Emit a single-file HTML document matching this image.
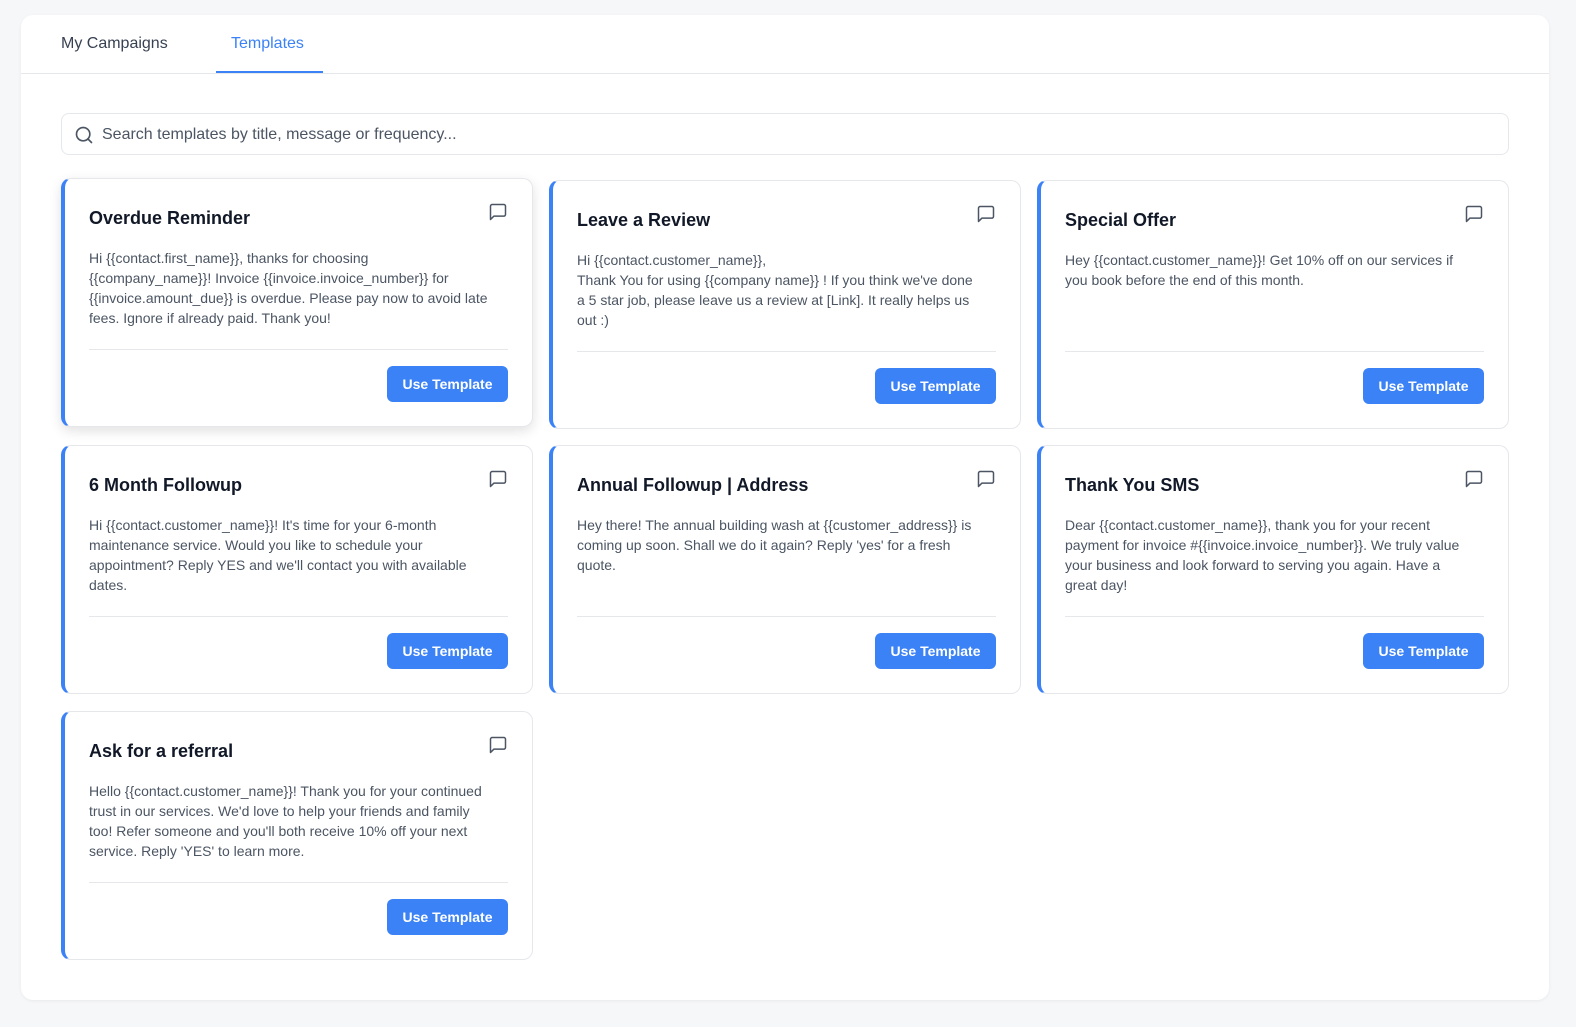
<!DOCTYPE html>
<html><head><meta charset="utf-8"><style>
*{box-sizing:border-box;margin:0;padding:0}
body{width:1576px;height:1027px;background:#f6f7f9;font-family:"Liberation Sans",Arial,sans-serif;position:relative;overflow:hidden}
.main{position:absolute;left:21px;top:15px;width:1528px;height:985px;background:#fff;border-radius:12px;box-shadow:0 1px 3px rgba(0,0,0,.06)}
.tabs{position:absolute;left:0;top:0;right:0;height:59px;border-bottom:1px solid #e5e7eb}
.tab{position:absolute;top:20px;font-size:16px;color:#374151}
.tab.act{color:#3b82f6}
.ul{position:absolute;left:195px;top:56px;width:107px;height:2px;background:#3b82f6}
.search{position:absolute;left:40px;top:98px;width:1448px;height:42px;border:1px solid #e5e7eb;border-radius:8px}
.search span{position:absolute;left:40px;top:12px;font-size:16px;color:#4b5563}
.search svg{position:absolute;left:12px;top:11px}
.card{position:absolute;width:472px;height:249px;background:#fff;border:1px solid #e5e7eb;border-left:4px solid #3b82f6;border-radius:10px}
.card.hov{box-shadow:0 4px 12px rgba(0,0,0,.12)}
.card h3{position:absolute;left:24px;top:25px;font-size:18px;font-weight:bold;color:#111827;line-height:28px}
.card p{position:absolute;left:24px;top:69px;width:430px;font-size:14px;line-height:20px;color:#4b5563;white-space:nowrap}
.card .ic{position:absolute;right:24px;top:23px}
.card hr{position:absolute;left:24px;right:24px;top:170px;border:0;border-top:1px solid #e5e7eb}
.card .btn{position:absolute;right:24px;top:187px;width:121px;height:36px;background:#3b82f6;color:#fff;border-radius:6px;font-size:14px;font-weight:bold;text-align:center;line-height:36px}
</style></head><body>
<div class="main">
<div class="tabs"><div class="tab" style="left:40px">My Campaigns</div><div class="tab act" style="left:210px">Templates</div><div class="ul"></div></div>
<div class="search"><svg width="20" height="20" viewBox="0 0 24 24" fill="none" stroke="#4b5563" stroke-width="2" stroke-linecap="round"><circle cx="11" cy="11" r="8"/><path d="M21 21l-4.3-4.3"/></svg><span>Search templates by title, message or frequency...</span></div>
</div>
<svg width="0" height="0" style="position:absolute"><defs><symbol id="m" viewBox="0 0 24 24"><path d="M21 15a2 2 0 0 1-2 2H7l-4 4V5a2 2 0 0 1 2-2h14a2 2 0 0 1 2 2z" fill="none" stroke="#4b5563" stroke-width="1.8" stroke-linejoin="round"/></symbol></defs></svg>

<div class="card hov" style="left:61px;top:178px"><h3>Overdue Reminder</h3><svg class="ic" width="20" height="20"><use href="#m"/></svg><p>Hi {{contact.first_name}}, thanks for choosing<br>{{company_name}}! Invoice {{invoice.invoice_number}} for<br>{{invoice.amount_due}} is overdue. Please pay now to avoid late<br>fees. Ignore if already paid. Thank you!</p><hr><div class="btn">Use Template</div></div>
<div class="card" style="left:549px;top:180px"><h3>Leave a Review</h3><svg class="ic" width="20" height="20"><use href="#m"/></svg><p>Hi {{contact.customer_name}},<br>Thank You for using {{company name}} ! If you think we've done<br>a 5 star job, please leave us a review at [Link]. It really helps us<br>out :)</p><hr><div class="btn">Use Template</div></div>
<div class="card" style="left:1037px;top:180px"><h3>Special Offer</h3><svg class="ic" width="20" height="20"><use href="#m"/></svg><p>Hey {{contact.customer_name}}! Get 10% off on our services if<br>you book before the end of this month.</p><hr><div class="btn">Use Template</div></div>

<div class="card" style="left:61px;top:445px"><h3>6 Month Followup</h3><svg class="ic" width="20" height="20"><use href="#m"/></svg><p>Hi {{contact.customer_name}}! It's time for your 6-month<br>maintenance service. Would you like to schedule your<br>appointment? Reply YES and we'll contact you with available<br>dates.</p><hr><div class="btn">Use Template</div></div>
<div class="card" style="left:549px;top:445px"><h3>Annual Followup | Address</h3><svg class="ic" width="20" height="20"><use href="#m"/></svg><p>Hey there! The annual building wash at {{customer_address}} is<br>coming up soon. Shall we do it again? Reply 'yes' for a fresh<br>quote.</p><hr><div class="btn">Use Template</div></div>
<div class="card" style="left:1037px;top:445px"><h3>Thank You SMS</h3><svg class="ic" width="20" height="20"><use href="#m"/></svg><p>Dear {{contact.customer_name}}, thank you for your recent<br>payment for invoice #{{invoice.invoice_number}}. We truly value<br>your business and look forward to serving you again. Have a<br>great day!</p><hr><div class="btn">Use Template</div></div>

<div class="card" style="left:61px;top:711px"><h3>Ask for a referral</h3><svg class="ic" width="20" height="20"><use href="#m"/></svg><p>Hello {{contact.customer_name}}! Thank you for your continued<br>trust in our services. We'd love to help your friends and family<br>too! Refer someone and you'll both receive 10% off your next<br>service. Reply 'YES' to learn more.</p><hr><div class="btn">Use Template</div></div>
</body></html>
